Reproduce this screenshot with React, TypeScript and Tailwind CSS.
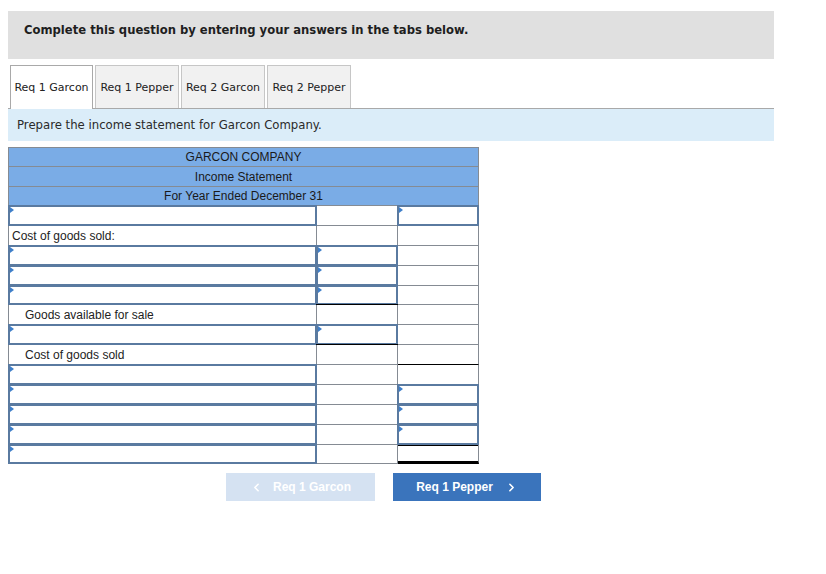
import { ChevronLeft, ChevronRight } from "lucide-react"

type Cell = {
  kind: "input" | "label" | "blank"
  text?: string
  indent?: boolean
  under?: "single" | "double"
  overline?: boolean
}

type Row = { h: string; cells: [Cell, Cell, Cell] }

const IN: Cell = { kind: "input" }
const BL: Cell = { kind: "blank" }

const rows: Row[] = [
  { h: "h-[20px]", cells: [IN, BL, IN] },
  { h: "h-[20px]", cells: [{ kind: "label", text: "Cost of goods sold:" }, BL, BL] },
  { h: "h-[20px]", cells: [IN, IN, BL] },
  { h: "h-[20px]", cells: [IN, IN, BL] },
  { h: "h-[19px]", cells: [IN, { kind: "input", under: "single" }, BL] },
  { h: "h-[20px]", cells: [{ kind: "label", text: "Goods available for sale", indent: true }, BL, BL] },
  { h: "h-[20px]", cells: [IN, { kind: "input", under: "single" }, BL] },
  { h: "h-[20px]", cells: [{ kind: "label", text: "Cost of goods sold", indent: true }, BL, { kind: "blank", under: "single" }] },
  { h: "h-[20px]", cells: [IN, BL, BL] },
  { h: "h-[20px]", cells: [IN, BL, IN] },
  { h: "h-[20px]", cells: [IN, BL, IN] },
  { h: "h-[20px]", cells: [IN, BL, IN] },
  { h: "h-[19px]", cells: [IN, BL, { kind: "blank", overline: true, under: "double" }] },
]

const colW = ["w-[308px]", "w-[81px]", "w-[81px]"]

function InputBox({ under }: { under?: "single" | "double" }) {
  return (
    <div className="absolute -inset-px border-2 border-[#5a7aa0] bg-white">
      <span className="absolute left-0 top-0 h-0 w-0 border-y-[3px] border-l-[4px] border-y-transparent border-l-[#3f7fc9]" />
      {under === "single" && <span className="absolute -bottom-[2px] -left-[2px] -right-[2px] h-px bg-black" />}
    </div>
  )
}

function TableCell({ cell, w }: { cell: Cell; w: string }) {
  const bottom =
    cell.under === "double" && cell.kind === "blank"
      ? "border-b-[3px] border-b-black"
      : cell.under === "single" && cell.kind === "blank"
        ? "border-b-black"
        : "border-b-[#858b93]"
  return (
    <div
      className={`relative h-full ${w} border-r border-b border-r-[#858b93] ${bottom} ${
        cell.overline ? "shadow-[inset_0_1px_0_#000]" : ""
      }`}
    >
      {cell.kind === "input" && <InputBox under={cell.under} />}
      {cell.kind === "label" && (
        <div className={`flex h-full items-center text-[12px] text-[#222] ${cell.indent ? "pl-[16px]" : "pl-[3px]"}`}>
          {cell.text}
        </div>
      )}
    </div>
  )
}

const tabs = ["Req 1 Garcon", "Req 1 Pepper", "Req 2 Garcon", "Req 2 Pepper"]

export default function App() {
  return (
    <div className="min-h-screen bg-white pl-[8px] pt-[11px]">
      <div className="w-[766px]">
        {/* Banner */}
        <div className="flex h-[48px] items-center bg-[#e0e0e0] pl-[16px] pb-[8px] font-['DejaVu_Sans',Verdana,sans-serif] text-[11.6px] font-bold text-[#1e1e1e]">
          Complete this question by entering your answers in the tabs below.
        </div>

        {/* Tabs */}
        <div className="mt-[6px] flex h-[44px] items-end gap-[2px] border-b border-[#a9a9a9] pl-[2px] font-['DejaVu_Sans',Verdana,sans-serif] text-[11px] text-[#222]">
          {tabs.map((t, i) => (
            <div
              key={t}
              className={
                i === 0
                  ? "-mb-px flex h-[44px] w-[83px] items-center justify-center border border-b-0 border-[#a9a9a9] bg-white pt-[2px]"
                  : "flex h-[43px] w-[84px] items-center justify-center border border-b-0 border-[#c6c6c6] bg-[#f1f1f1] pt-[2px]"
              }
            >
              {t}
            </div>
          ))}
        </div>

        {/* Instruction */}
        <div className="flex h-[32px] items-center bg-[#dbedf9] pl-[9px] pt-[2px] font-['DejaVu_Sans',Verdana,sans-serif] text-[11.7px] text-[#2a2a2a]">
          Prepare the income statement for Garcon Company.
        </div>

        {/* Statement */}
        <div className="mt-[6px] w-[471px] border-l border-t border-[#858b93] font-['Liberation_Sans',Arial,sans-serif]">
          {[
            ["GARCON COMPANY", "h-[19px]"],
            ["Income Statement", "h-[20px]"],
            ["For Year Ended December 31", "h-[19px]"],
          ].map(([t, h]) => (
            <div
              key={t}
              className={`flex ${h} items-center justify-center border-r border-b border-[#858b93] bg-[#7aace6] text-[12px] text-[#1a1a1a]`}
            >
              {t}
            </div>
          ))}
          {rows.map((r, i) => (
            <div key={i} className={`flex ${r.h}`}>
              {r.cells.map((c, j) => (
                <TableCell key={j} cell={c} w={colW[j]} />
              ))}
            </div>
          ))}
        </div>

        {/* Navigation */}
        <div className="ml-[218px] mt-[9px] flex gap-[18px] font-['Liberation_Sans',Arial,sans-serif] text-[12px] font-bold text-white">
          <div className="flex h-[28px] w-[149px] items-center justify-center gap-[10px] bg-[#d5e2f2]">
            <ChevronLeft size={13} strokeWidth={3} />
            <span>Req 1 Garcon</span>
          </div>
          <div className="flex h-[28px] w-[148px] items-center justify-center gap-[12px] bg-[#3a74bc]">
            <span>Req 1 Pepper</span>
            <ChevronRight size={13} strokeWidth={3} />
          </div>
        </div>
      </div>
    </div>
  )
}
